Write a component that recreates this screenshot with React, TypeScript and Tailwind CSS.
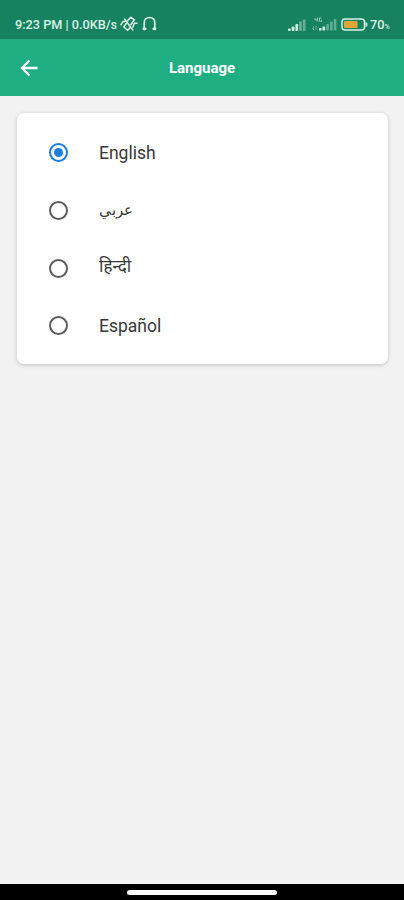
import { useState } from 'react';
import clsx from 'clsx';

type Language = {
  code: string;
  label: string;
  labelClass: string;
};

const languages: Language[] = [
  { code: 'en', label: 'English', labelClass: 'text-[17.5px]' },
  { code: 'ar', label: 'عربي', labelClass: 'text-[15px] -mt-px' },
  { code: 'hi', label: 'हिन्दी', labelClass: 'text-[17px] -mt-[5px]' },
  { code: 'es', label: 'Español', labelClass: 'text-[17.5px]' },
];

function VibrateOffIcon() {
  return (
    <svg width="18" height="16" viewBox="0 0 18 16" fill="none" stroke="currentColor" strokeWidth="1.5" strokeLinecap="round" strokeLinejoin="round">
      <path d="M1 8.800L2.800 5.500h2.400M17 7.200h-2.600l-1.600 4" />
      <path d="M7.500 4.800l3.300-3.600 3.600 2.600-3.600 5M6.200 7.500L3.800 11l3.800 3.200 2.800-2.800" />
      <path d="M4.500 3l8.300 11" />
    </svg>
  );
}

function HeadphonesIcon() {
  return (
    <svg width="15" height="16" viewBox="0 0 15 16" fill="none" stroke="currentColor" strokeLinecap="round">
      <path d="M2.200 12.500V7C2.200 3.500 4.200 1.500 7.500 1.500s5.300 2 5.300 5.500v5.500" strokeWidth="1.700" />
      <path d="M1.900 12.800h1.300M11.800 12.800h1.300" strokeWidth="2.800" />
    </svg>
  );
}

function SignalIcon({ level }: { level: number }) {
  return (
    <svg width="18" height="12" viewBox="0 0 18 12" fill="currentColor">
      {[2.5, 4.5, 7, 9.5, 11.5].map((height, i) => (
        <rect key={i} x={i * 3.7} y={12 - height} width="2.700" height={height} rx=".7" opacity={i < level ? 0.95 : 0.4} />
      ))}
    </svg>
  );
}

function DataSignalIcon() {
  return (
    <svg width="25" height="14" viewBox="0 0 25 14" fill="currentColor">
      <path d="M3 1v2h2.500M5.500 .600v4M9.500 1H7.500v3.300h2V3" fill="none" stroke="currentColor" strokeWidth=".9" opacity=".7" />
      <path d="M1.500 9v4M0 11l1.500 2M4 13V9l1.200 1.500" fill="none" stroke="currentColor" strokeWidth=".8" opacity=".45" />
      <rect x="7" y="11" width="2.500" height="2.500" rx=".6" />
      <rect x="10.500" y="9.500" width="2.600" height="4" rx=".6" opacity=".95" />
      <rect x="14.300" y="7" width="2.600" height="6.500" rx=".6" opacity=".4" />
      <rect x="18" y="4.500" width="2.600" height="9" rx=".6" opacity=".38" />
      <rect x="21.800" y="2" width="2.600" height="11.500" rx=".6" opacity=".38" />
    </svg>
  );
}

function BatteryIcon() {
  return (
    <svg width="27" height="13" viewBox="0 0 27 13">
      <rect x="1" y="1" width="22.500" height="11" rx="3" fill="none" stroke="#d9f1e5" strokeWidth="1.500" />
      <rect x="3" y="3" width="13.500" height="7" rx="1" fill="#e0a637" />
      <path d="M25 4.500c1.300.700 1.300 3.300 0 4z" fill="#d9f1e5" stroke="#d9f1e5" />
    </svg>
  );
}

function StatusBar() {
  return (
    <div className="flex h-[39px] shrink-0 items-center justify-between bg-[#178260] pt-[10px] pr-[14px] pl-[15px] text-[#d9f1e5]">
      <div className="flex items-center">
        <span className="w-[103px] text-[12.7px] font-medium whitespace-nowrap">
          9:23 PM | 0.0KB/<span className="text-[12px]">s</span>
        </span>
        <span className="ml-[2px]"><VibrateOffIcon /></span>
        <span className="ml-[4px]"><HeadphonesIcon /></span>
      </div>
      <div className="flex items-center">
        <span className="pt-px"><SignalIcon level={3} /></span>
        <span className="ml-[6px]"><DataSignalIcon /></span>
        <span className="ml-[4px]"><BatteryIcon /></span>
        <span className="ml-[2px] w-[20px] text-[12.7px] font-medium whitespace-nowrap">
          70<span className="text-[7px]">%</span>
        </span>
      </div>
    </div>
  );
}

function Header() {
  return (
    <header className="grid h-[57px] shrink-0 grid-cols-[58px_1fr_58px] items-center bg-[#1eae82] text-white">
      <button type="button" aria-label="Back" className="pl-[20px]">
        <svg width="19" height="18" viewBox="0 0 19 18" fill="none" stroke="currentColor" strokeWidth="2.300">
          <path d="M17.500 9H3M9.500 1.500L2 9l7.500 7.500" />
        </svg>
      </button>
      <h1 className="pt-[2px] text-center text-[15px] font-bold">Language</h1>
    </header>
  );
}

export default function App() {
  const [selected, setSelected] = useState('en');

  return (
    <div className="flex h-screen w-full flex-col overflow-hidden bg-[#f2f2f2] font-['Roboto','Noto_Sans',sans-serif]">
      <StatusBar />
      <Header />

      <main className="flex-1 pt-[17px] pr-[16px] pl-[17px]">
        <div role="radiogroup" className="flex h-[251px] flex-col rounded-[7px] bg-white pt-[11px] shadow-[0_1px_4px_rgba(0,0,0,0.2)]">
          {languages.map(({ code, label, labelClass }) => (
            <button
              key={code}
              type="button"
              role="radio"
              aria-checked={selected === code}
              onClick={() => setSelected(code)}
              className="flex h-[57.7px] items-center pl-[32px] text-left"
            >
              <span
                className={clsx(
                  'flex size-[19px] items-center justify-center rounded-full border-2',
                  selected === code ? 'border-[#1b80dc]' : 'border-[#5c5c5c]'
                )}
              >
                {selected === code && <span className="size-[9px] rounded-full bg-[#1b80dc]" />}
              </span>
              <span className={clsx('ml-[31px] leading-6 text-[#383838]', labelClass)}>{label}</span>
            </button>
          ))}
        </div>
      </main>

      <div className="flex h-4 shrink-0 justify-center bg-black pt-[6px]">
        <div className="h-[5px] w-[150px] rounded-full bg-white" />
      </div>
    </div>
  );
}
